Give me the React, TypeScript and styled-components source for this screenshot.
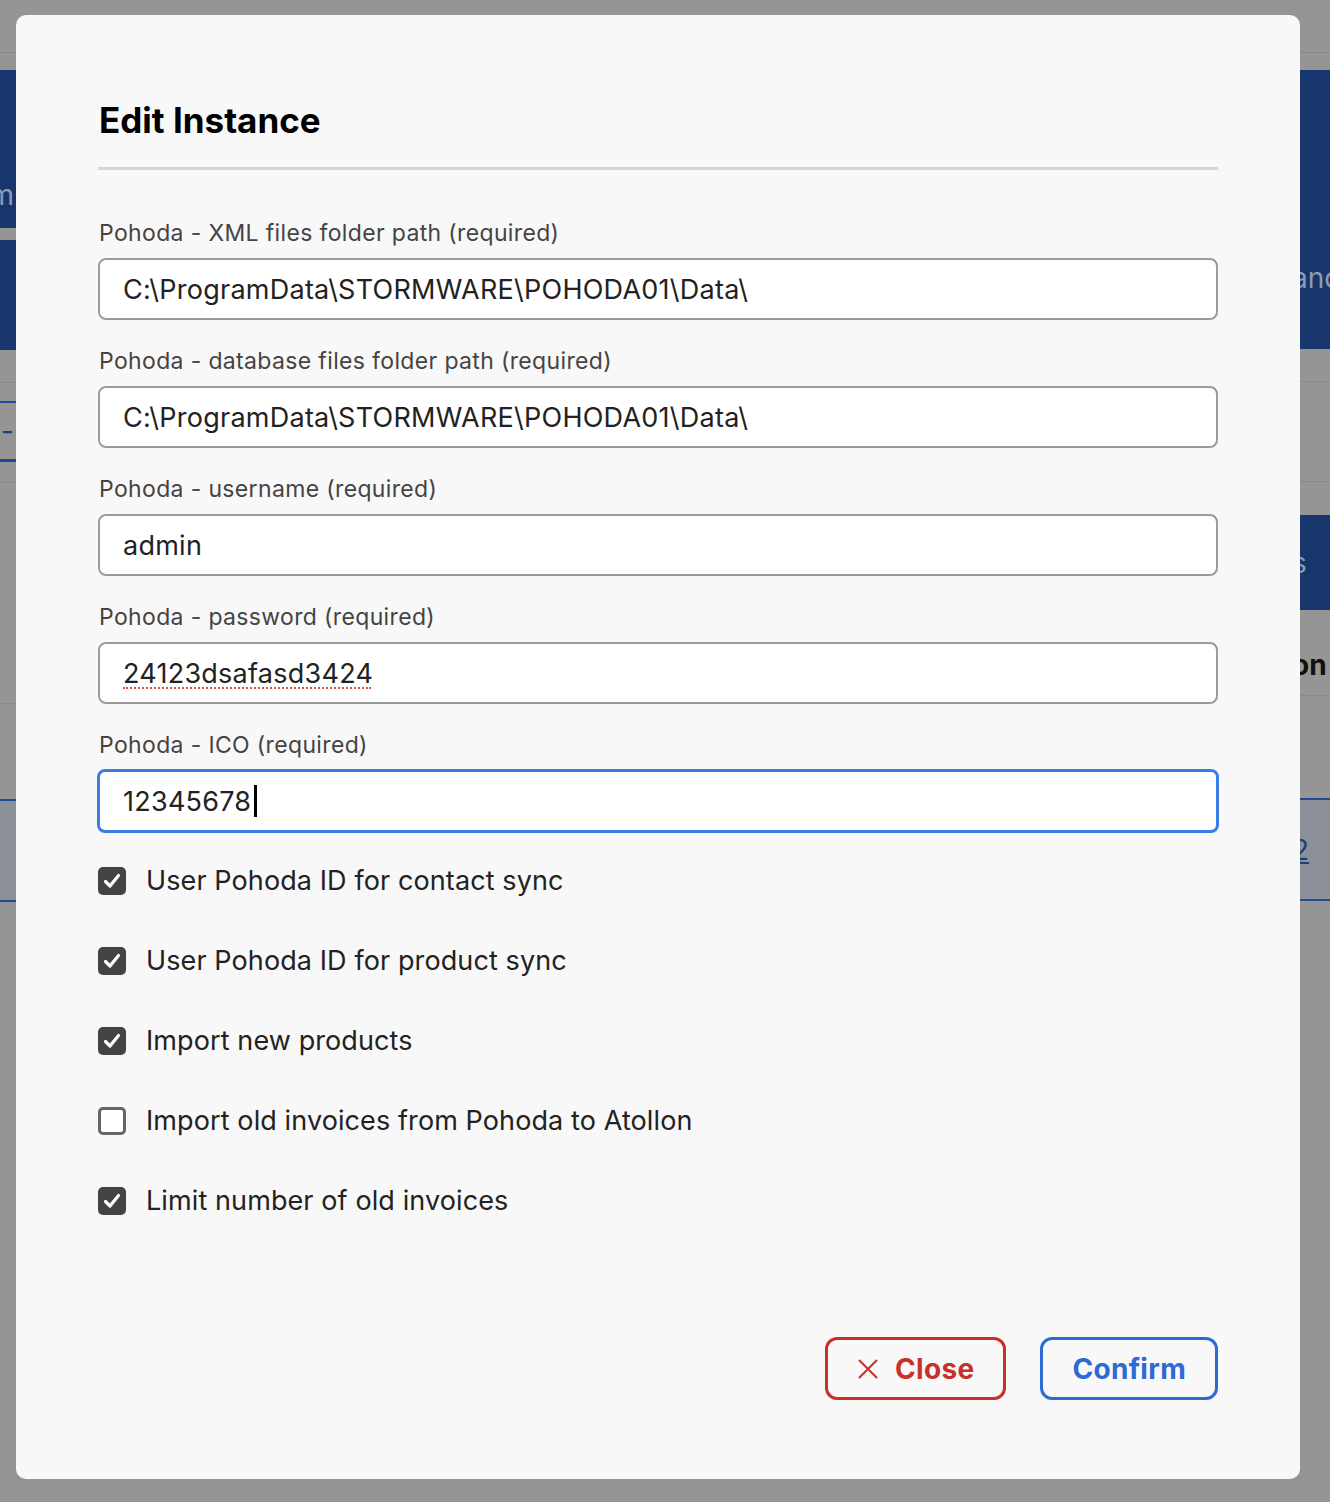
import React, { useState } from 'react';
import styled, { createGlobalStyle } from 'styled-components';

const Colors = {
  Backdrop: '#959595',
  BackdropLine: '#888888',
  Navy: '#17366d',
  NavyLine: '#1f4a94',
  Row: '#8c9099',
  Modal: '#f8f8f8',
  Label: '#444444',
  Text: '#222222',
  Border: '#9b9b9b',
  Focus: '#3b7de8',
  Check: '#444444',
  Red: '#c8302a',
  Blue: '#2d6ad6',
};

const GlobalStyle = createGlobalStyle`
  html, body {
    margin: 0;
    padding: 0;
    background: ${Colors.Backdrop};
    font-family: Inter, "Noto Sans", "Liberation Sans", sans-serif;
  }
  * { box-sizing: border-box; }
`;

type Band = {
  h: number;
  kind: 'gray' | 'navy' | 'row' | 'line' | 'navyLine';
  text?: string;
  bold?: boolean;
  top?: number;
};

const leftBands: Band[] = [
  { h: 52, kind: 'gray' },
  { h: 1, kind: 'line' },
  { h: 17, kind: 'gray' },
  { h: 158, kind: 'navy', text: 'm', top: 108 },
  { h: 12, kind: 'gray' },
  { h: 110, kind: 'navy' },
  { h: 32, kind: 'gray' },
  { h: 1, kind: 'line' },
  { h: 18, kind: 'gray' },
  { h: 2, kind: 'navyLine' },
  { h: 56, kind: 'gray', text: '-' },
  { h: 3, kind: 'navyLine' },
  { h: 20, kind: 'gray' },
  { h: 1, kind: 'line' },
  { h: 220, kind: 'gray' },
  { h: 1, kind: 'line' },
  { h: 95, kind: 'gray' },
  { h: 2, kind: 'navyLine' },
  { h: 99, kind: 'row' },
  { h: 2, kind: 'navyLine' },
  { h: 600, kind: 'gray' },
];

const rightBands: Band[] = [
  { h: 52, kind: 'gray' },
  { h: 1, kind: 'line' },
  { h: 17, kind: 'gray' },
  { h: 279, kind: 'navy', text: 'anc', top: 191 },
  { h: 32, kind: 'gray' },
  { h: 1, kind: 'line' },
  { h: 99, kind: 'gray' },
  { h: 1, kind: 'line' },
  { h: 33, kind: 'gray' },
  { h: 95, kind: 'navy', text: 's' },
  { h: 85, kind: 'gray', text: 'on', bold: true, top: 38 },
  { h: 1, kind: 'line' },
  { h: 102, kind: 'gray' },
  { h: 2, kind: 'navyLine' },
  { h: 99, kind: 'row', text: '2' },
  { h: 2, kind: 'navyLine' },
  { h: 600, kind: 'gray' },
];

const fields = [
  { label: 'Pohoda - XML files folder path (required)', value: 'C:\\ProgramData\\STORMWARE\\POHODA01\\Data\\' },
  { label: 'Pohoda - database files folder path (required)', value: 'C:\\ProgramData\\STORMWARE\\POHODA01\\Data\\' },
  { label: 'Pohoda - username (required)', value: 'admin' },
  { label: 'Pohoda - password (required)', value: '24123dsafasd3424', misspelled: true },
  { label: 'Pohoda - ICO (required)', value: '12345678', focused: true },
];

const options = [
  { label: 'User Pohoda ID for contact sync', checked: true },
  { label: 'User Pohoda ID for product sync', checked: true },
  { label: 'Import new products', checked: true },
  { label: 'Import old invoices from Pohoda to Atollon', checked: false },
  { label: 'Limit number of old invoices', checked: true },
];

const App: React.FC = () => {
  const [checks, setChecks] = useState(options.map((o) => o.checked));

  const toggle = (idx: number) => {
    setChecks((prev) => prev.map((c, i) => (i === idx ? !c : c)));
  };

  return (
    <>
      <GlobalStyle />
      <PageBehind>
        <EdgeColumn $align="right">
          {leftBands.map((b, idx) => (
            <BandRow key={idx} $h={b.h} $kind={b.kind} $bold={b.bold} $top={b.top}>
              {b.text}
            </BandRow>
          ))}
        </EdgeColumn>
        <EdgeColumn $align="left">
          {rightBands.map((b, idx) => (
            <BandRow key={idx} $h={b.h} $kind={b.kind} $bold={b.bold} $top={b.top}>
              {b.text}
            </BandRow>
          ))}
        </EdgeColumn>
      </PageBehind>

      <Overlay>
        <Modal>
          <Title>Edit Instance</Title>
          <Divider />
          <FieldList>
            {fields.map((f, idx) => (
              <Field key={idx}>
                <FieldLabel>{f.label}</FieldLabel>
                <InputWrap>
                  <TextInput
                    defaultValue={f.value}
                    $focused={f.focused}
                    spellCheck={false}
                    autoFocus={f.focused}
                    onFocus={(e) => {
                      const len = e.target.value.length;
                      e.target.setSelectionRange(len, len);
                    }}
                  />
                  {f.misspelled && <SpellMark />}
                  {f.focused && <Caret />}
                </InputWrap>
              </Field>
            ))}
          </FieldList>
          <OptionList>
            {options.map((o, idx) => (
              <OptionRow key={idx} onClick={() => toggle(idx)}>
                <CheckBox $checked={checks[idx]}>
                  {checks[idx] && (
                    <svg width="22" height="22" viewBox="0 0 22 22">
                      <path
                        d="M4.5 11.5 L9 16 L17.5 5.5"
                        fill="none"
                        stroke="#ffffff"
                        strokeWidth="3.2"
                        strokeLinecap="round"
                        strokeLinejoin="round"
                      />
                    </svg>
                  )}
                </CheckBox>
                <OptionText>{o.label}</OptionText>
              </OptionRow>
            ))}
          </OptionList>
          <Footer>
            <ActionButton $color={Colors.Red}>
              <svg width="22" height="22" viewBox="0 0 22 22">
                <path d="M2.5 2.5 L19.5 19.5 M19.5 2.5 L2.5 19.5" stroke={Colors.Red} strokeWidth="2" strokeLinecap="round" />
              </svg>
              Close
            </ActionButton>
            <ActionButton $color={Colors.Blue}>Confirm</ActionButton>
          </Footer>
        </Modal>
      </Overlay>
    </>
  );
};

const PageBehind = styled.div`
  width: 100%;
  height: 1502px;
  display: flex;
  justify-content: space-between;
  overflow: hidden;
`;

const EdgeColumn = styled.div<{ $align: 'left' | 'right' }>`
  width: 60px;
  display: flex;
  flex-direction: column;
  ${({ $align }) => ($align === 'right' ? 'margin-left: -44px;' : 'margin-right: -30px;')}
  & > div {
    justify-content: ${({ $align }) => ($align === 'right' ? 'flex-end' : 'flex-start')};
    ${({ $align }) => ($align === 'left' ? 'text-indent: -10px;' : '')}
  }
`;

const bandColor = (kind: Band['kind']) => {
  switch (kind) {
    case 'navy':
      return Colors.Navy;
    case 'row':
      return Colors.Row;
    case 'line':
      return Colors.BackdropLine;
    case 'navyLine':
      return Colors.NavyLine;
    default:
      return Colors.Backdrop;
  }
};

const BandRow = styled.div<{ $h: number; $kind: Band['kind']; $bold?: boolean; $top?: number }>`
  flex: none;
  height: ${({ $h }) => `${$h}px`};
  background: ${({ $kind }) => bandColor($kind)};
  display: flex;
  align-items: ${({ $top }) => ($top !== undefined ? 'flex-start' : 'center')};
  padding: ${({ $top }) => `${$top ?? 0}px`} 2px 0;
  font-size: 28px;
  line-height: 34px;
  font-weight: ${({ $bold }) => ($bold ? 700 : 400)};
  color: ${({ $kind, $bold }) => ($bold ? '#111111' : $kind === 'navy' ? '#8f9bb3' : '#1f3f7a')};
  text-decoration: ${({ $kind }) => ($kind === 'row' ? 'underline' : 'none')};
  overflow: hidden;
  white-space: nowrap;
`;

const Overlay = styled.div`
  position: fixed;
  inset: 0;
  padding: 15px 30px 23px 16px;
  display: flex;
  align-items: flex-start;
`;

const Modal = styled.div`
  width: 1284px;
  height: 1464px;
  background: ${Colors.Modal};
  border-radius: 10px;
  padding: 78px 82px 79px 83px;
  display: flex;
  flex-direction: column;
`;

const Title = styled.h1`
  margin: 0;
  font-size: 35px;
  font-weight: 700;
  line-height: 54px;
  color: #000000;
`;

const Divider = styled.div`
  height: 3px;
  margin: 20px 0 0 -1px;
  background: #d6d6d6;
`;

const FieldList = styled.div`
  margin-top: 50px;
  display: flex;
  flex-direction: column;
  gap: 28px;
`;

const Field = styled.div`
  display: flex;
  flex-direction: column;
  gap: 12px;
`;

const FieldLabel = styled.label`
  font-size: 23px;
  line-height: 26px;
  color: ${Colors.Label};
  letter-spacing: 0.35px;
`;

const InputWrap = styled.div`
  position: relative;
`;

const TextInput = styled.input<{ $focused?: boolean }>`
  display: block;
  height: ${({ $focused }) => ($focused ? '64px' : '62px')};
  margin: ${({ $focused }) => ($focused ? '-1px -1px 0 -2px' : '0 0 0 -1px')};
  width: ${({ $focused }) => ($focused ? 'calc(100% + 3px)' : 'calc(100% + 1px)')};
  padding: 0 23px;
  border: ${({ $focused }) => ($focused ? `3px solid ${Colors.Focus}` : `2px solid ${Colors.Border}`)};
  border-radius: 8px;
  background: #ffffff;
  font-family: inherit;
  font-size: 27px;
  letter-spacing: 0.25px;
  color: ${Colors.Text};
  outline: none;
  caret-color: transparent;
`;

const SpellMark = styled.span`
  position: absolute;
  left: 24px;
  bottom: 15px;
  width: 248px;
  border-bottom: 2px dotted #e0504a;
  pointer-events: none;
`;

const Caret = styled.span`
  position: absolute;
  left: 155px;
  top: 15px;
  width: 3px;
  height: 32px;
  background: #000000;
  pointer-events: none;
`;

const OptionList = styled.div`
  margin-top: 31px;
  display: flex;
  flex-direction: column;
  gap: 47px;
`;

const OptionRow = styled.div`
  height: 33px;
  display: flex;
  align-items: center;
  gap: 20px;
  cursor: pointer;
  margin-left: -1px;
`;

const CheckBox = styled.span<{ $checked: boolean }>`
  width: 28px;
  height: 28px;
  flex: none;
  display: flex;
  align-items: center;
  justify-content: center;
  border-radius: 5px;
  background: ${({ $checked }) => ($checked ? Colors.Check : '#ffffff')};
  border: ${({ $checked }) => ($checked ? 'none' : '3px solid #666666')};
`;

const OptionText = styled.span`
  font-size: 27px;
  color: ${Colors.Text};
  letter-spacing: 0.1px;
`;

const Footer = styled.div`
  margin-top: auto;
  display: flex;
  justify-content: flex-end;
  gap: 34px;
`;

const ActionButton = styled.button<{ $color: string }>`
  height: 63px;
  padding: 0 29px;
  display: flex;
  align-items: center;
  gap: 16px;
  background: transparent;
  border: 3px solid ${({ $color }) => $color};
  border-radius: 12px;
  color: ${({ $color }) => $color};
  font-family: inherit;
  font-size: 28px;
  font-weight: 700;
  letter-spacing: 0.3px;
  cursor: pointer;
`;

export default App;
